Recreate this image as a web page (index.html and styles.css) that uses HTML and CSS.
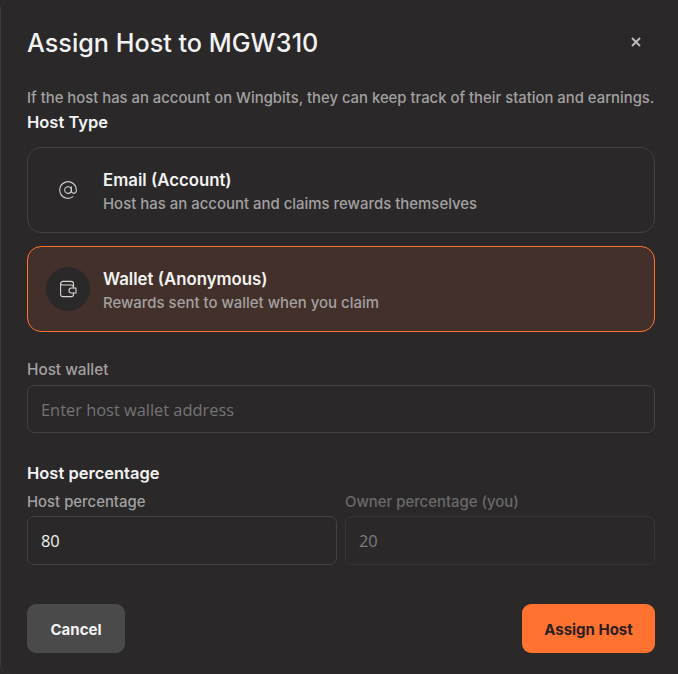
FILE: index.html
```html
<!DOCTYPE html>
<html lang="en">
<head>
    <meta charset="UTF-8">
    <title>Assign Host</title>
    <link rel="stylesheet" href="styles.css">
</head>
<body>
    <div class="dialog">
        <!-- Header -->
        <div class="dialog-header">
            <h2>Assign Host to MGW310</h2>
            <button class="close-button" aria-label="Close">
                <svg width="10" height="10" viewBox="0 0 10 10" fill="none" stroke="#bdbdbd" stroke-width="1.8">
                    <path d="M1 1l8 8M9 1l-8 8" />
                </svg>
            </button>
        </div>

        <p class="description">If the host has an account on Wingbits, they can keep track of their station and earnings.</p>
        <div class="section-title">Host Type</div>

        <!-- Host type options -->
        <div class="type-list">
            <div class="type-card">
                <div class="type-icon">
                    <svg width="20" height="20" viewBox="0 0 24 24" fill="none" stroke="#d0d0d0" stroke-width="1.3" stroke-linecap="round" stroke-linejoin="round">
                        <circle cx="12" cy="12" r="4" />
                        <path d="M16 8v5a3 3 0 0 0 6 0v-1a10 10 0 1 0-4 8" />
                    </svg>
                </div>
                <div class="type-text">
                    <div class="type-name">Email (Account)</div>
                    <div class="type-note">Host has an account and claims rewards themselves</div>
                </div>
            </div>
            <div class="type-card selected">
                <div class="type-icon">
                    <svg width="20" height="20" viewBox="0 0 20 20" fill="none" stroke="#d8d4d0" stroke-width="1.1" stroke-linecap="round" stroke-linejoin="round">
                        <path d="M15.500 9V4.800a2.400 2.400 0 0 0-2.400-2.400H5a2.400 2.400 0 0 0-2.400 2.400v10.400A2.400 2.400 0 0 0 5 17.600h8.100a2.400 2.400 0 0 0 2.400-2.400V14" />
                        <path d="M2.600 4.800A1.800 1.800 0 0 0 4.400 6h8.700a2.400 2.400 0 0 1 2.400 2.400" />
                        <path d="M13.500 9h4.500v5h-4.500a2.500 2.500 0 0 1 0-5z" />
                    </svg>
                </div>
                <div class="type-text">
                    <div class="type-name">Wallet (Anonymous)</div>
                    <div class="type-note">Rewards sent to wallet when you claim</div>
                </div>
            </div>
        </div>

        <!-- Wallet -->
        <label class="field-label wallet-label" for="host-wallet">Host wallet</label>
        <input class="text-input" id="host-wallet" type="text" placeholder="Enter host wallet address">

        <!-- Percentages -->
        <div class="section-title percent-title">Host percentage</div>
        <div class="percent-row">
            <div class="percent-field">
                <label class="field-label" for="host-percent">Host percentage</label>
                <input class="text-input" id="host-percent" type="text" value="80">
            </div>
            <div class="percent-field disabled">
                <label class="field-label" for="owner-percent">Owner percentage (you)</label>
                <input class="text-input" id="owner-percent" type="text" value="20" disabled>
            </div>
        </div>

        <div class="dialog-actions">
            <button class="btn btn-cancel">Cancel</button>
            <button class="btn btn-assign">Assign Host</button>
        </div>
    </div>
</body>
</html>
```

FILE: styles.css
```css
* {
    box-sizing: border-box;
}

html, body {
    margin: 0;
    padding: 0;
    background-color: #2a2829;
}

body {
    font-family: Inter, "Liberation Sans", sans-serif;
    color: #f2f2f2;
}

.dialog {
    width: 678px;
    height: 674px;
    padding: 0 23px 0 26px;
    background-color: #2a2829;
    border-left: 1px solid #3d3b3c;
    border-radius: 10px 0 0 10px;
}

/* Header */
.dialog-header {
    display: flex;
    justify-content: space-between;
    align-items: center;
    height: 84px;
}

.dialog-header h2 {
    margin: 2px 0 0;
    font-size: 25.200px;
    line-height: 32px;
    font-weight: 500;
    color: #f2f2f2;
}

.close-button {
    display: flex;
    padding: 0;
    margin-right: 14px;
    border: none;
    background: none;
}

.description {
    margin: 6px 0 0;
    font-size: 14.850px;
    line-height: 16px;
    font-weight: 500;
    color: #a3a1a1;
    white-space: nowrap;
}

.section-title {
    margin-top: 6px;
    font-size: 16.500px;
    line-height: 20px;
    font-weight: 600;
}

/* Host type options */
.type-list {
    display: flex;
    flex-direction: column;
    gap: 13px;
    margin-top: 15px;
}

.type-card {
    display: flex;
    align-items: center;
    gap: 13px;
    height: 86px;
    padding: 0 18px;
    border: 1px solid #434142;
    border-radius: 14px;
}

.type-card.selected {
    background-color: #43302a;
    border-color: #ff7230;
}

.type-icon {
    display: flex;
    justify-content: center;
    align-items: center;
    width: 44px;
    height: 44px;
    border-radius: 50%;
}

.selected .type-icon {
    background-color: #2a2829;
}

.type-text {
    padding-top: 6px;
}

.type-name {
    font-size: 16.800px;
    line-height: 20px;
    font-weight: 600;
}

.type-note {
    margin-top: 2px;
    font-size: 14.950px;
    line-height: 24px;
    font-weight: 500;
    color: #a3a1a1;
}

/* Form fields */
.field-label {
    display: block;
    font-size: 14.900px;
    line-height: 20px;
    font-weight: 500;
    color: #a3a1a1;
}

.wallet-label {
    margin-top: 28px;
    font-size: 15.300px;
}

.text-input {
    display: block;
    width: 100%;
    height: 48px;
    margin-top: 5px;
    padding: 0 13px;
    font-family: "Open Sans", sans-serif;
    font-size: 16.400px;
    color: #f2f2f2;
    background: none;
    border: 1px solid #434142;
    border-radius: 7px;
}

.text-input::placeholder {
    color: #757374;
}

.percent-title {
    margin-top: 30px;
}

.percent-row {
    display: flex;
    gap: 8px;
    margin-top: 9px;
}

.percent-field {
    flex: 1;
}

.percent-field .text-input {
    height: 49px;
    margin-top: 4px;
}

.disabled .field-label {
    color: #6b696a;
}

.disabled .text-input {
    color: #7d7b7c;
    border-color: #383637;
}

/* Buttons */
.dialog-actions {
    display: flex;
    justify-content: space-between;
    margin-top: 39px;
}

.btn {
    height: 49px;
    padding: 2px 0 0;
    font-family: inherit;
    font-size: 15px;
    font-weight: 700;
    border: none;
    border-radius: 9px;
}

.btn-cancel {
    width: 98px;
    background-color: #4a4a4a;
    color: #f2f2f2;
}

.btn-assign {
    width: 133px;
    background-color: #ff7230;
    color: #2a2020;
}
```
